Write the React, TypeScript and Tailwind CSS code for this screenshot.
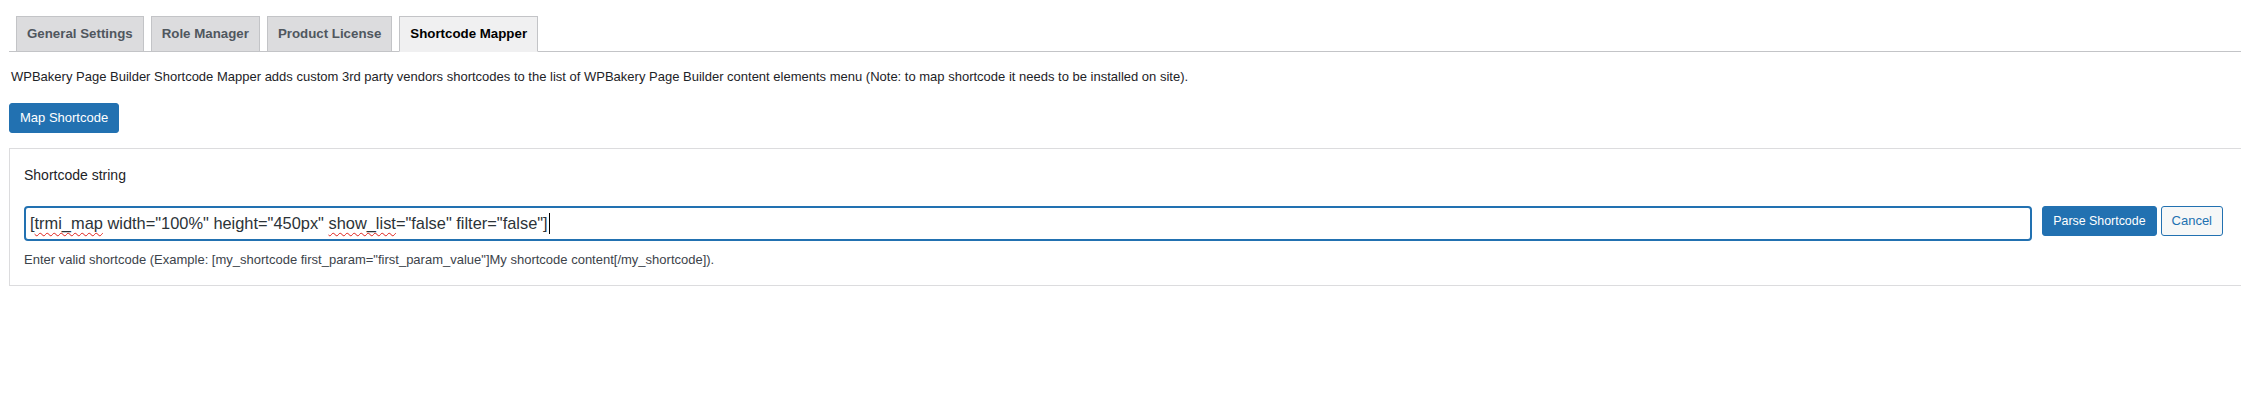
import clsx from 'clsx';

const tabs = [
  { label: 'General Settings', active: false },
  { label: 'Role Manager', active: false },
  { label: 'Product License', active: false },
  { label: 'Shortcode Mapper', active: true },
];

function NavTabs() {
  return (
    <nav className="flex items-start border-b border-[#c3c4c7]">
      {tabs.map((tab) => (
        <a
          key={tab.label}
          href="#"
          className={clsx(
            'ml-[7px] border border-[#c3c4c7] px-[10px] py-[5px] text-[13.3px] leading-[24px] font-semibold',
            tab.active
              ? '-mb-px border-b-[#f0f0f1] bg-[#f0f0f1] text-black'
              : 'border-b-0 bg-[#dcdcde] text-[#50575e]',
          )}
        >
          {tab.label}
        </a>
      ))}
    </nav>
  );
}

function ShortcodeField() {
  return (
    <div className="flex h-[35px] min-w-0 flex-1 items-center rounded-[4px] border-2 border-[#2271b1] bg-white px-[4px] text-[16.4px] text-[#2c3338]">
      <span className="whitespace-pre">
        [
        <span className="underline decoration-[#e0201a] decoration-wavy decoration-1 underline-offset-[3px]">
          trmi_map
        </span>
        {' width="100%" height="450px" '}
        <span className="underline decoration-[#e0201a] decoration-wavy decoration-1 underline-offset-[3px]">
          show_list
        </span>
        {'="false" filter="false"]'}
      </span>
      <span className="ml-px h-[21px] w-px bg-black" />
    </div>
  );
}

export default function App() {
  return (
    <div className="h-[395px] w-full overflow-hidden bg-white pt-4 pl-[9px] font-['Liberation_Sans','Noto_Sans',sans-serif] text-[13px] text-[#1d2327]">
      <NavTabs />

      <p className="mt-[15px] pl-[2px] leading-[20px]">
        WPBakery Page Builder Shortcode Mapper adds custom 3rd party vendors shortcodes to the list of WPBakery Page
        Builder content elements menu (Note: to map shortcode it needs to be installed on site).
      </p>

      <button
        type="button"
        className="mt-4 h-[30px] rounded-[3px] border border-[#2271b1] bg-[#2271b1] px-[10px] text-[13px] text-white"
      >
        Map Shortcode
      </button>

      <div className="mt-[15px] mr-[-1px] border border-[#dcdcde] bg-white pt-4 pr-[18px] pb-[15px] pl-[14px]">
        <h3 className="text-[14px] leading-[20px] text-[#1d2327]">Shortcode string</h3>

        <div className="mt-[21px] flex items-start">
          <ShortcodeField />
          <button
            type="button"
            className="ml-[10px] h-[30px] shrink-0 rounded-[3px] border border-[#2271b1] bg-[#2271b1] px-[10px] text-[12.4px] text-white"
          >
            Parse Shortcode
          </button>
          <button
            type="button"
            className="ml-[4px] h-[30px] shrink-0 rounded-[3px] border border-[#2271b1] bg-[#f6f7f7] px-[10px] text-[13px] text-[#2271b1]"
          >
            Cancel
          </button>
        </div>

        <p className="mt-[9px] leading-[20px] text-[#3c434a]">
          Enter valid shortcode (Example: [my_shortcode first_param="first_param_value"]My shortcode
          content[/my_shortcode]).
        </p>
      </div>
    </div>
  );
}
